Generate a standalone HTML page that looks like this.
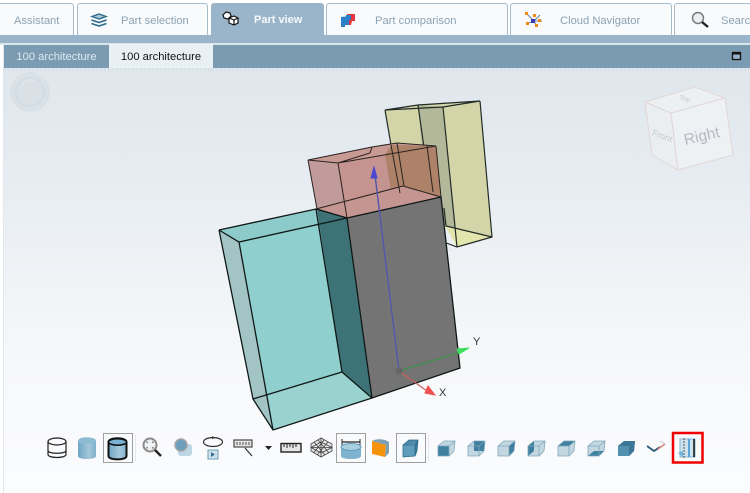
<!DOCTYPE html>
<html><head><meta charset="utf-8">
<style>
html,body{margin:0;padding:0}
body{width:750px;height:493px;overflow:hidden;position:relative;background:#fff;font-family:"Liberation Sans",sans-serif}
.abs{position:absolute}
.strip{left:0;top:0;width:750px;height:35px;background:#fff}
.blue{left:0;top:35px;width:750px;height:9px;background:#9ab5ca}
.tab{position:absolute;top:3px;height:32px;box-sizing:border-box;background:#f8fafc;border:1px solid #a5bccd;border-bottom:none;border-radius:3px 3px 0 0;font-size:11.2px;color:#8ba3b5;line-height:34px;white-space:nowrap;overflow:hidden}
.tab.on{background:#9ab5ca;border-color:#9ab5ca;color:#f7fafc;font-weight:bold;font-size:11px;line-height:33px}
.tab span{position:absolute;top:0}
.hdr{left:4px;top:45px;width:746px;height:23px;background:#7a9bb1}
.t1{left:4px;top:45px;width:105px;height:23px;color:#dfe8ee;font-size:11.2px;line-height:24px;text-align:center}
.t2{left:109px;top:44px;width:104px;height:24px;background:#e9f0f4;color:#111;font-size:11.2px;line-height:26px;text-align:center}
.view{left:3px;top:68px;width:747px;height:425px;background:linear-gradient(180deg,#dfe7ed 0%,#e6ecf1 25%,#f0f3f6 50%,#f8f9fb 75%,#fbfcfe 100%)}
.lb{left:3px;top:44px;width:1px;height:449px;background:#dfe7ec}
</style></head><body>
<div class="abs strip"></div>
<div class="abs blue"></div>
<div class="tab" style="left:-3px;width:77px"><span style="left:16px">Assistant</span></div>
<div class="tab" style="left:77px;width:131px"><span style="left:43px">Part selection</span></div>
<div class="tab on" style="left:211px;width:113px"><span style="left:42px">Part view</span></div>
<div class="tab" style="left:326px;width:182px"><span style="left:48px">Part comparison</span></div>
<div class="tab" style="left:510px;width:162px"><span style="left:49px">Cloud Navigator</span></div>
<div class="tab" style="left:674px;width:90px"><span style="left:46px">Search</span></div>
<div class="abs" style="left:0;top:43px;width:750px;height:2px;background:#dbe5ec"></div>
<div class="abs hdr"></div>
<div class="abs t1">100 architecture</div>
<div class="abs t2">100 architecture</div>
<div class="abs view"></div>
<div class="abs lb"></div>

<svg class="abs" style="left:0;top:0" width="750" height="493" viewBox="0 0 750 493">
<defs>
<linearGradient id="cy" x1="0" x2="1" y1="0" y2="0"><stop offset="0" stop-color="#6ea5c5"/><stop offset=".6" stop-color="#a4c7da"/><stop offset="1" stop-color="#7eb0cc"/></linearGradient>
<g id="cb"><path d="M0 6L6 1H17L16 11L11 16H0Z" fill="#c3d7e0"/></g>
<g id="ce"><path d="M0 6L6 1H17L16 11L11 16H0ZM0 6H11L17 1M11 6V16" fill="none" stroke="#7fa7bc" stroke-width=".8"/></g>
</defs>
<path d="M4 69.500H750" stroke="#8a9aa8" stroke-opacity=".35" stroke-dasharray="1 3"/>
<!-- tab icons -->
<g stroke="#2f6c8c" stroke-width="1.400" fill="#a9c8d8"><path d="M92 16.500l7-2.500 7 2.500-7 2.500z"/><path d="M91.500 20l7.500 2.500 7.500-2.500M91.500 23.500l7.500 2.500 7.500-2.500" fill="none" stroke-width="1.700"/></g>
<g stroke="#111" stroke-width="1.200" fill="#fff"><path d="M223 15l3-3 4 1 1 3-3 3-4-1z"/><path d="M229 18l5-2 4 2v5l-4 2-5-2z"/><path d="M229 18l5 2 4-2M234 20v5" fill="none"/></g>
<path d="M341 17l10-1v9h-6v2h-4z" fill="#2c7fc9"/><path d="M347 14h8v7h-3l-1 4h-2v-7h-2z" fill="#e8333c"/><path d="M346 15h5v4l-3 3h-2z" fill="#2c7fc9"/>
<g stroke="#6d7f99" stroke-width="1"><path d="M526 13l8 8M534 21l6-6M534 21l8 0M534 21l-8 3M534 21l2 4"/></g>
<g fill="#f08c13"><rect x="525" y="12" width="3" height="3"/><rect x="533" y="14" width="3" height="3"/><rect x="538" y="19" width="3" height="3"/><rect x="526" y="22" width="3" height="3"/><rect x="535" y="24" width="3" height="3"/></g><rect x="531" y="19" width="4" height="4" fill="#3a3ab8"/>
<circle cx="698" cy="18" r="5.500" fill="#e8eef2" stroke="#777" stroke-width="1.400"/><path d="M702 22l6 5" stroke="#222" stroke-width="2.400"/>
<!-- maximize -->
<rect x="732.500" y="52.500" width="8" height="7" fill="#9ab5ca" stroke="#111" stroke-width="1.300"/><path d="M732 53.500h9" stroke="#111" stroke-width="2"/>
<!-- compass -->
<circle cx="30" cy="92" r="20" fill="#d9e1e7"/><circle cx="30" cy="92" r="14" fill="none" stroke="#d3dce2" stroke-width="2"/><path d="M22 84a12 12 0 0 1 14-3" stroke="#e0e6eb" stroke-width="2" fill="none"/>
<!-- view cube -->
<g stroke="#e2d6d8" stroke-width="1" fill="#ecf0f2"><path d="M645 102l50-15 30 11-54 15z"/><path d="M645 102l26 11 7 57-26-15z" fill="#eaeef0"/><path d="M671 113l54-15 8 57-55 15z" fill="#eef1f3"/></g>
<text x="702" y="141" font-size="15.500" fill="#b7b9c3" text-anchor="middle" transform="rotate(-13 702 137)">Right</text>
<text x="662" y="139" font-size="9" fill="#c6c9ce" text-anchor="middle" transform="rotate(20 662 137)">Front</text>
<text x="685" y="101" font-size="7" fill="#c6c9ce" text-anchor="middle" transform="rotate(15 685 99)">Top</text>

<!-- yellow box -->
<path d="M385 110L418 105L480 101L492 237L457 247L441 197L391 145Z" fill="#d3d5a9"/>
<path d="M418 105L443 107L456 228L445 226L426 190Z" fill="#b4b89b"/>
<path d="M445 226L492 237L457 247Z" fill="#e3e5ad"/>
<path d="M385 110L418 105L480 101M385 110L443 107L480 101M443 107L457 247M418 105L430 190M444 208L446 226L492 237M480 101L492 237L457 247L441 241M385 110L391 145" fill="none" stroke="#222b26" stroke-width="1.200"/>
<!-- red box -->
<path d="M308 160L338 163L436 146L441 197L347 218L317 209Z" fill="#c59390"/>
<path d="M308 160L338 163L347 218L317 209Z" fill="#c09b9a"/>
<path d="M308 160L372 147L397 143L436 146L338 163Z" fill="#c79a94"/>
<path d="M391 145L436 146L441 197L394 209L385 155Z" fill="#ad8269"/>
<path d="M316 209L403 186L441 197L347 218Z" fill="#c59691"/>
<path d="M308 160L338 163L436 146L397 143L372 147ZM338 163L347 218M308 160L317 209L347 218M316 209L403 186L441 197M436 146L441 197M391 145L400 193M397 143L404 186M372 147L370 153L338 163M427 146L433 192" fill="none" stroke="#2b2320" stroke-width="1"/>
<!-- teal box -->
<path d="M219 230L316 209L347 218L372 398L273 430L253 399Z" fill="#8fcfcd"/>
<path d="M219 230L239 242L273 430L253 399Z" fill="#a3c4c5"/>
<path d="M219 230L316 209L347 218L239 242Z" fill="#8ccbca"/>
<path d="M269 394L342 372L372 398L273 430Z" fill="#9ad2d0"/>
<path d="M317 209L347 218L372 398L342 372Z" fill="#3d7376"/>
<!-- gray -->
<path d="M347 218L441 197L460 368L372 398Z" fill="#747474"/>
<path d="M219 230L316 209L347 218M219 230L239 242L347 218M239 242L273 430M219 230L253 399L273 430L372 398M253 399L342 372L372 398M316 209L342 372M347 218L372 398M347 218L441 197L460 368L372 398" fill="none" stroke="#101817" stroke-width="1.300"/>
<!-- axes -->
<path d="M399 371L375 175" stroke="#5258ab" stroke-width="1.400"/><path d="M374 167L371 178H377Z" fill="#4a48cf" stroke="#4a48cf" stroke-width="1"/>
<path d="M399 371L464 351" stroke="#3f8f4d" stroke-width="1.300"/><path d="M457 349L469 348L459 354Z" fill="#3fe05f" stroke="#3fe05f"/>
<path d="M399 371L427 391" stroke="#c9605a" stroke-width="1.200"/><path d="M435 395L425 393L428 386Z" fill="#f0504f" stroke="#f0504f"/>
<circle cx="399" cy="371" r="3.500" fill="#666"/>
<text x="473" y="345" font-size="11" fill="#333">Y</text>
<text x="439" y="396" font-size="11" fill="#333">X</text>

<!-- toolbar -->
<rect x="103.500" y="433.500" width="29" height="29" fill="#f8fafb" stroke="#a0a0a0"/>
<rect x="336.500" y="433.500" width="29" height="29" fill="#f8fafb" stroke="#a0a0a0"/>
<rect x="396.500" y="433.500" width="29" height="29" fill="#f8fafb" stroke="#a0a0a0"/>
<path d="M135.500 434v28M428.500 434v28" stroke="#e6e9ec"/>
<g stroke="#222" stroke-width="1.200" fill="none"><ellipse cx="57" cy="441.500" rx="9" ry="3.500"/><path d="M48 441.500v13c0 4 18 4 18 0v-13M48 451c2 3 16 3 18 0"/></g>
<path d="M78 441c0-5 18-5 18 0v15c0 4-18 4-18 0z" fill="url(#cy)"/><ellipse cx="87" cy="441" rx="9" ry="3" fill="#8fbcd5"/>
<path d="M108.500 442c0-5 18-5 18 0v14c0 4.500-18 4.500-18 0z" fill="url(#cy)" stroke="#111" stroke-width="2"/><ellipse cx="117.500" cy="442" rx="9" ry="3.200" fill="#79b2d2" stroke="#111" stroke-width="1.500"/>
<circle cx="150" cy="445" r="6.500" fill="#eef0f2" stroke="#8b8b8b" stroke-width="2"/><path d="M155 450l6 6" stroke="#222" stroke-width="2.400"/><path d="M147 443v-1h1M153 443v-1h-1M147 447v1h1M153 447v1h-1" stroke="#666" fill="none"/>
<rect x="178" y="444" width="14" height="12" rx="3" fill="#bcd6e4"/><circle cx="181" cy="445" r="6" fill="#6d9fbd" stroke="#a5a5a5" stroke-width="1.500"/>
<ellipse cx="213" cy="442" rx="9.500" ry="4.500" fill="none" stroke="#333" stroke-width="1.200"/><path d="M212 436l3 2-3 1z" fill="#333"/><rect x="208" y="450" width="10" height="9" fill="#cfe2ec" stroke="#6b9fb9"/><path d="M211 452l4 2.500-4 2.500z" fill="#35708f"/>
<rect x="234" y="440" width="18" height="7" fill="#e4e4e4" stroke="#555" stroke-width="1.300"/><path d="M237 442v3M240 442v3M243 442v3M246 442v3M249 442v3" stroke="#555"/><path d="M245 448l7 8" stroke="#333" stroke-width="1.200"/>
<path d="M265 446h7l-3.500 4z" fill="#222"/>
<rect x="281" y="443.500" width="20" height="8.500" fill="#e6e6e6" stroke="#222" stroke-width="1.400"/><path d="M284 444v3M287 444v4M290 444v3M293 444v4M296 444v3" stroke="#222"/>
<g fill="#e4e6e8" stroke="#444" stroke-width=".8"><path d="M311 444L321 438L332 444V451L321 457L311 451Z"/><path d="M311 447.500L321 442L332 447.500L321 453ZM314 442L325 455M318 440L329 453M328 442L317 455M324 440L313.500 453M321 438V457M311 447.500H332" fill="none"/></g>
<path d="M342 442h18" stroke="#222" stroke-width="1.200"/><path d="M342 439v6M360 439v6" stroke="#222"/>
<path d="M341 447c0-4 20-4 20 0v9c0 4-20 4-20 0z" fill="#7fb3d0"/><ellipse cx="351" cy="447" rx="10" ry="3.500" fill="#a9cfe1" stroke="#5f9cbd"/>
<path d="M372 441L386 445L385 457L372 454Z" fill="#f5930c"/><path d="M372 441C377 438 385 439 389 442V453L385 457L386 445Z" fill="#7ea0b2"/>
<path d="M403 445l12-1v12l-12 1z" fill="#5f9dbd"/><path d="M403 445l6-5h9l-3 4z" fill="#4d89aa"/><path d="M415 444l3-4-1 11-2 5z" fill="#3f7898"/>
<path d="M403 445l6-5h9l-1 11-2 5-12 1zM403 445h12l3-5M415 444v12" stroke="#2f6b8c" stroke-width=".8" fill="none"/>
<g transform="translate(438,440)"><use href="#cb"/><rect x="0" y="6" width="11" height="10" fill="#3f7f9f"/><use href="#ce"/></g>
<g transform="translate(468,440)"><use href="#cb"/><path d="M6 1H17L16 11H6Z" fill="#3f7f9f"/><use href="#ce"/></g>
<g transform="translate(498,440)"><use href="#cb"/><path d="M11 6L17 1L16 11L11 16Z" fill="#3f7f9f"/><use href="#ce"/></g>
<g transform="translate(528,440)"><use href="#cb"/><path d="M0 6L6 1V11L0 16Z" fill="#3f7f9f"/><use href="#ce"/></g>
<g transform="translate(558,440)"><use href="#cb"/><path d="M0 6L6 1H17L11 6Z" fill="#3f7f9f"/><use href="#ce"/></g>
<g transform="translate(588,440)"><use href="#cb"/><path d="M0 16L6 11H16L11 16Z" fill="#3f7f9f"/><use href="#ce"/></g>
<g transform="translate(618,440)"><path d="M0 6L6 1H17L16 11L11 16H0Z" fill="#5391b0"/><path d="M0 6L6 1H17L11 6ZM11 6L17 1L16 11L11 16Z" fill="#3b7797"/></g>
<path d="M647 446L654 451L660 447" fill="none" stroke="#2f5a78" stroke-width="1.800"/><path d="M658 449L665 444" stroke="#d9806f" stroke-width="1.400"/><path d="M660 441L665 444" stroke="#bcc4d0"/>
<rect x="680" y="439" width="15" height="18" fill="#cfe3ef" stroke="#8ab6d0"/><path d="M684 438v21" stroke="#555" stroke-dasharray="2 1"/><path d="M689 439v18" stroke="#5aa6d8" stroke-width="2"/><path d="M694 439v18" stroke="#111" stroke-width="1.500"/><path d="M678 453l5-2v6z" fill="#6bb0de"/>
<rect x="673" y="433" width="29.500" height="29.500" fill="none" stroke="#f00000" stroke-width="2.500"/>
</svg>
</body></html>
